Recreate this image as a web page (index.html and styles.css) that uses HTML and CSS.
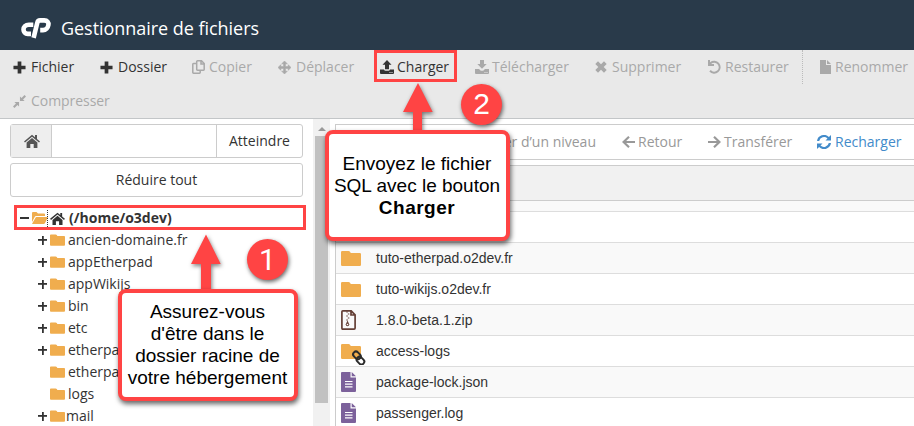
FILE: index.html
```
<!DOCTYPE html>
<html lang="fr">
<head>
<meta charset="utf-8">
<title>Gestionnaire de fichiers</title>
<link rel="stylesheet" href="styles.css">
</head>
<body>
<svg class="defs" width="0" height="0">
  <symbol id="plus" viewBox="0 0 14 14"><path d="M5 .5h4V5h4.500v4H9v4.500H5V9H.5V5H5z"/></symbol>
  <symbol id="folder" viewBox="0 0 20 15"><path d="M0 1.200Q0 0 1.200 0h6.300q1 0 1.500.8l.8 1.200h9q1.200 0 1.200 1.200v10.600q0 1.200-1.200 1.200H1.200Q0 15 0 13.800z"/></symbol>
  <symbol id="home" viewBox="0 0 16 14"><path d="M8 .7l3 2.500V1h2v3.900l3 2.500-1 1.200L8 2.800 1 8.600 0 7.400z"/><path d="M8 4.100l5.400 4.500V14H9.700v-4H6.300v4H2.600V8.600z"/></symbol>
  <symbol id="file" viewBox="0 0 15 20"><path d="M1 0h8.500v5.500H15V19q0 1-1 1H1q-1 0-1-1V1q0-1 1-1zM10.700 0L15 4.300h-4.300z"/><path d="M4 9.500h7.500M4 12.200h7.500M4 14.900h7.500" stroke="#fff" stroke-width="1.200"/></symbol>
</svg>

<header class="top">
  <svg class="logo" width="32" height="22" viewBox="0 0 32 22" fill="none" stroke="#fff" stroke-width="4.600"><path d="M13.300 7.800H8.800C5.500 7.800 3.500 10 3.500 12.600s1.700 4.300 4.200 4.300h3.300"/><path d="M13.600 20.900L17.300 5.800Q17.900 3.400 20 3.400h4.300c3 0 4.500 1.900 4.100 4.500-.4 2.800-2.600 5.200-5.400 5.200h-2.800"/></svg>
  <h1>Gestionnaire de fichiers</h1>
</header>

<nav class="tools">
  <a class="on"><svg width="13" height="13"><use href="#plus"/></svg><span>Fichier</span></a>
  <a class="on"><svg width="13" height="13"><use href="#plus"/></svg><span>Dossier</span></a>
  <a class="tight"><svg width="13" height="14" viewBox="0 0 13 14" fill="none" stroke="currentColor" stroke-width="1.500"><path d="M4.700 3.500H1.500q-.7 0-.7.700v8.300q0 .7.700.7h6q.7 0 .7-.7v-2M5.500.8h4L12.200 3.500v6q0 .7-.7.700h-6q-.8 0-.8-.7v-8q0-.7.800-.7zM9 .8V4h3.200"/></svg><span>Copier</span></a>
  <a><svg width="13" height="13" viewBox="0 0 14 14"><path d="M7 0l3 3H8v3h3V4l3 3-3 3V8H8v3h2l-3 3-3-3h2V8H3v2L0 7l3-3v2h3V3H4z" stroke="currentColor" stroke-width=".6"/></svg><span>Déplacer</span></a>
  <a class="on snug"><svg width="14" height="14" viewBox="0 0 14 14"><path d="M7 0l4.500 4.700H9v4.600H5V4.700H2.500zM0 9.500h4q.4 1.300 1.500 1.300h3q1.100 0 1.500-1.300h4V13q0 1-1 1H1q-1 0-1-1zM9.500 12v1h1v-1zm2 0v1h1v-1z"/></svg><span>Charger</span></a>
  <a class="snug"><svg width="14" height="14" viewBox="0 0 14 14"><path d="M5 0h4v4h2.700L7 8.700 2.300 4H5zM0 9h4l1.800 1.800h2.400L10 9h4v4q0 1-1 1H1q-1 0-1-1zM9.500 12v1h1v-1zm2 0v1h1v-1z"/></svg><span>Télécharger</span></a>
  <a><svg width="12" height="12" viewBox="0 0 12 12"><path d="M3 .3l3 3 3-3L11.700 3l-3 3 3 3L9 11.700l-3-3-3 3L.3 9l3-3-3-3z"/></svg><span>Supprimer</span></a>
  <a class="tight"><svg width="14" height="14" viewBox="0 0 14 14"><path d="M1 0v6h6V4H4.100a4.500 4.500 0 1 1-.3 6.100L2.300 11.600A6.500 6.500 0 1 0 3 2.200V0z"/></svg><span>Restaurer</span></a>
  <a class="tight rename"><svg width="11" height="14" viewBox="0 0 11 14"><path d="M0 0h6v5h5v9H0zM7 0l4 4H7z"/></svg><span>Renommer</span></a>
  <a class="compress"><svg width="13" height="13" viewBox="0 0 14 14"><path d="M7.500 1.500l1.700 1.700L12.400 0 14 1.600l-3.200 3.200 1.700 1.700h-5zM1.500 7.500h5v5l-1.700-1.700L1.600 14 0 12.400l3.200-3.200z"/></svg><span>Compresser</span></a>
</nav>

<main class="work">
  <aside class="side">
    <div class="controls">
      <div class="go"><span class="addon"><svg width="16" height="14"><use href="#home"/></svg></span><span class="field"></span><span class="btn">Atteindre</span></div>
      <div class="collapse">Réduire tout</div>
    </div>
    <ul class="tree">
      <li class="root"><i class="minus"></i><svg class="dir" width="16" height="12" viewBox="0 0 16 12"><path d="M0 10V1q0-1 1-1h3.500l1.500 1.500h6q1 0 1 1V4H4q-.8 0-1.200.7zM.2 11.500L3.500 5.700q.3-.7 1-.7H16l-3 6q-.4 1-1.400 1H.7q-.7 0-.5-.5z"/></svg><b class="focus"></b><svg class="house" width="15" height="13" viewBox="0 0 16 14"><use href="#home"/></svg><strong>(/home/o3dev)</strong></li>
      <li><i class="add"></i><svg class="dir" width="15" height="12"><use href="#folder"/></svg>ancien-domaine.fr</li>
      <li><i class="add"></i><svg class="dir" width="15" height="12"><use href="#folder"/></svg>appEtherpad</li>
      <li><i class="add"></i><svg class="dir" width="15" height="12"><use href="#folder"/></svg>appWikijs</li>
      <li><i class="add"></i><svg class="dir" width="15" height="12"><use href="#folder"/></svg>bin</li>
      <li><i class="add"></i><svg class="dir" width="15" height="12"><use href="#folder"/></svg>etc</li>
      <li><i class="add"></i><svg class="dir" width="15" height="12"><use href="#folder"/></svg>etherpad</li>
      <li><i></i><svg class="dir" width="15" height="12"><use href="#folder"/></svg>etherpad</li>
      <li><i></i><svg class="dir" width="15" height="12"><use href="#folder"/></svg>logs</li>
      <li class="mail"><i class="add"></i><svg class="dir" width="15" height="12"><use href="#folder"/></svg>mail</li>
    </ul>
  </aside>
  <div class="scroll"><span class="up"></span><span class="thumb"></span></div>
  <section class="files">
    <div class="nav">
      <a class="level">Monter d’un niveau</a>
      <a class="back"><svg width="13" height="12" viewBox="0 0 13 12" fill="none" stroke="currentColor" stroke-width="2.200"><path d="M7 .8L1.600 6 7 11.200M2 6h11"/></svg>Retour</a>
      <a class="next"><svg width="13" height="12" viewBox="0 0 13 12" fill="none" stroke="currentColor" stroke-width="2.200"><path d="M6 .8L11.400 6 6 11.200M11 6H0"/></svg>Transférer</a>
      <a class="reload"><svg width="14" height="14" viewBox="0 0 14 14"><path d="M0 6a7 7 0 0 1 11.900-4L14 0v5.500H8.500l2-2A5 5 0 0 0 2.200 6zM14 8a7 7 0 0 1-11.900 4L0 14V8.500h5.500l-2 2A5 5 0 0 0 11.800 8z"/></svg>Recharger</a>
    </div>
    <div class="table">
      <div class="head"></div>
      <div class="row part"></div>
      <div class="row"></div>
      <div class="row"><span class="ico"><svg class="fold" width="20" height="15"><use href="#folder"/></svg></span>tuto-etherpad.o2dev.fr</div>
      <div class="row"><span class="ico"><svg class="fold" width="20" height="15"><use href="#folder"/></svg></span>tuto-wikijs.o2dev.fr</div>
      <div class="row"><span class="ico"><svg width="15" height="20" viewBox="0 0 15 20" fill="none" stroke="#643f36" stroke-width="1.700"><path d="M1.800.9h8.400l3.900 3.900v13.300q0 1-1 1H1.800q-.9 0-.9-1V1.800Q.9.9 1.800.9zM10 1v4h4"/><path d="M5.300 2h1.500M6.800 4h1.500M5.300 6h1.500M6.800 8h1.500M5.300 10h1.500" stroke-width="1.200"/><path d="M6.500 10.500l1.700 3.800q0 2-1.700 2t-1.700-2z" fill="#643f36" stroke="none"/><circle cx="6.500" cy="14.500" r=".8" fill="#fff" stroke="none"/></svg></span>1.8.0-beta.1.zip</div>
      <div class="row"><span class="ico link"><svg width="25" height="21" viewBox="0 0 25 21"><path fill="#f0ad4e" d="M0 1.200Q0 0 1.200 0h6.300q1 0 1.500.8l.8 1.200h9q1.200 0 1.200 1.200v10.600q0 1.200-1.200 1.200H1.200Q0 15 0 13.800z"/><g fill="none" stroke="#2b2b2b" stroke-width="2" transform="rotate(45 17.700 14)"><rect x="10.400" y="10.600" width="8.400" height="5.600" rx="2.800"/><rect x="16.600" y="11.800" width="8.400" height="5.600" rx="2.800"/></g></svg></span>access-logs</div>
      <div class="row"><span class="ico"><svg class="doc" width="15" height="20"><use href="#file"/></svg></span>package-lock.json</div>
      <div class="row"><span class="ico"><svg class="doc" width="15" height="20"><use href="#file"/></svg></span>passenger.log</div>
    </div>
  </section>
</main>

<div class="mark upload-mark"></div>
<div class="mark root-mark"></div>
<svg class="arrows" width="914" height="426"><path d="M206 234.500l14.700 29.500H211v30h-10v-30h-10zM418 83l14.700 29H422v24h-9v-24h-10z"/></svg>
<div class="callout first"><p>Assurez-vous<br>d'être dans le<br>dossier racine de<br>votre hébergement</p></div>
<div class="callout second"><p>Envoyez le fichier<br>SQL avec le bouton<br><b>Charger</b></p></div>
<div class="badge one">1</div>
<div class="badge two">2</div>
</body>
</html>
```
FILE: styles.css
```
* { box-sizing: border-box; }
body { margin: 0; width: 914px; height: 426px; overflow: hidden; position: relative; background: #fff; color: #333; font: 14px/22px "Open Sans", sans-serif; }
svg { fill: currentColor; flex: none; display: block; }
svg[fill="none"] { fill: none; }
.defs { position: absolute; }
.top { height: 50px; background: #293a4a; display: flex; padding: 17px 0 0 20px; }
.top h1 { margin: 0 0 0 9px; color: #fff; font-size: 18px; line-height: 23px; font-weight: 400; letter-spacing: -.04px; }
.logo { fill: none; }
.tools { height: 69px; background: #e9e9e9; border-bottom: 1px solid #c3c6c8; display: grid; grid-template-columns: 87px 92px 86px 102px 95px 120px 112px 95px 112px; grid-template-rows: 34px 34px; padding-left: 13px; }
.tools a { display: flex; align-items: center; gap: 5px; color: #a9a9a9; white-space: nowrap; }
.tools a.tight { gap: 4px; }
.tools a.snug { gap: 3px; }
.tools a.on { color: #333; }
.tools .rename { border-left: 1px dotted #bbb; padding-left: 17px; }
.tools .compress { grid-column: 1 / 3; letter-spacing: -.05px; }
.work { height: 307px; display: flex; overflow: hidden; }
.side { width: 313px; }
.controls { padding: 5px 10px 0; }
.go, .collapse { height: 34px; border: 1px solid #ccc; border-radius: 3px; }
.go { display: flex; line-height: 32px; }
.addon { width: 41px; padding: 9px 0 0 13px; background: #eee; color: #555; border-right: 1px solid #ccc; }
.field { flex: 1; }
.btn { width: 86px; border-left: 1px solid #ccc; text-align: center; }
.collapse { margin-top: 5px; line-height: 32px; text-align: center; }
.tree { list-style: none; margin: 10px 0 0; padding: 0 0 0 38px; }
.tree li { height: 22px; display: flex; align-items: center; white-space: nowrap; line-height: 20px; }
.tree i { width: 9px; height: 9px; margin-right: 3px; }
.tree .add { background: linear-gradient(#333, #333) center/9px 1.800px no-repeat, linear-gradient(#333, #333) center/1.800px 9px no-repeat; }
.tree .dir { color: #f0ad4e; margin-right: 3px; }
.tree .mail .dir { margin-right: 1px; }
.tree .root { margin-left: -18px; }
.tree .minus { background: linear-gradient(#333, #333) center/9px 2px no-repeat; }
.tree .root .dir { margin-right: -1px; }
.focus { height: 17px; border-left: 1px dotted #333; margin-right: 2px; }
.house { margin-right: 4px; }
.scroll { width: 17px; background: #f1f1f1; padding: 8px 2px 0; display: flex; flex-direction: column; align-items: center; }
.up { border: 4px solid transparent; border-top: 0; border-bottom-color: #999; }
.thumb { width: 13px; height: 267px; margin-top: 5px; background: #c1c1c1; }
.files { flex: 1; padding: 5px 0 0 5px; }
.nav { height: 36px; border: 1px solid #ccc; border-right: 0; color: #999; display: grid; grid-template-columns: 260px 86px 109px 1fr; align-items: center; }
.nav a { display: flex; align-items: center; gap: 4px; white-space: nowrap; }
.nav .level { justify-content: flex-end; }
.nav .back { padding-left: 26px; gap: 3px; }
.nav .next { padding-left: 26px; gap: 3px; }
.nav .reload { padding-left: 26px; color: #428bca; }
.table { margin-top: 5px; border-left: 1px solid #ccc; font: 14px/31px "Liberation Sans", sans-serif; }
.head { height: 36px; background: #f1f1f1; border: solid #ccc; border-width: 1px 0; }
.row { height: 31px; border-bottom: 1px solid #ddd; display: flex; padding-left: 5px; }
.row.part { height: 11px; }
.row:nth-child(even) { background: #f9f9f9; }
.ico { width: 35px; height: 30px; display: flex; align-items: center; }
.link { padding-top: 6px; }
.fold { color: #f0ad4e; }
.doc { color: #7c619b; }
.mark { position: absolute; border: 3px solid #ff4444; }
.upload-mark { left: 374px; top: 50px; width: 83px; height: 32px; }
.root-mark { left: 14px; top: 205px; width: 292px; height: 25px; }
.arrows { position: absolute; left: 0; top: 0; fill: #ff4444; filter: drop-shadow(1px 2px 2px rgba(0,0,0,.5)); }
.callout { position: absolute; background: #fff; border: 4px solid #ff4444; border-radius: 8px; box-shadow: 1px 3px 5px rgba(0,0,0,.6); color: #000; font: 19px/22px "Liberation Sans", sans-serif; text-align: center; white-space: nowrap; }
.callout p { margin: 0; }
.callout b { letter-spacing: .5px; }
.first { left: 118px; top: 289px; width: 180px; height: 112px; padding: 8px 1px 0 0; }
.second { left: 325px; top: 130px; width: 185px; height: 111px; padding: 19px 1px 0 0; }
.badge { position: absolute; width: 41px; height: 41px; border-radius: 50%; background: #ff4444; box-shadow: 1px 2px 4px rgba(0,0,0,.6); color: #fff; font: 30px/41px "Liberation Sans", sans-serif; text-align: center; }
.one { left: 247px; top: 239px; font-family: Roboto, sans-serif; }
.two { left: 461px; top: 84px; line-height: 40px; }
```
